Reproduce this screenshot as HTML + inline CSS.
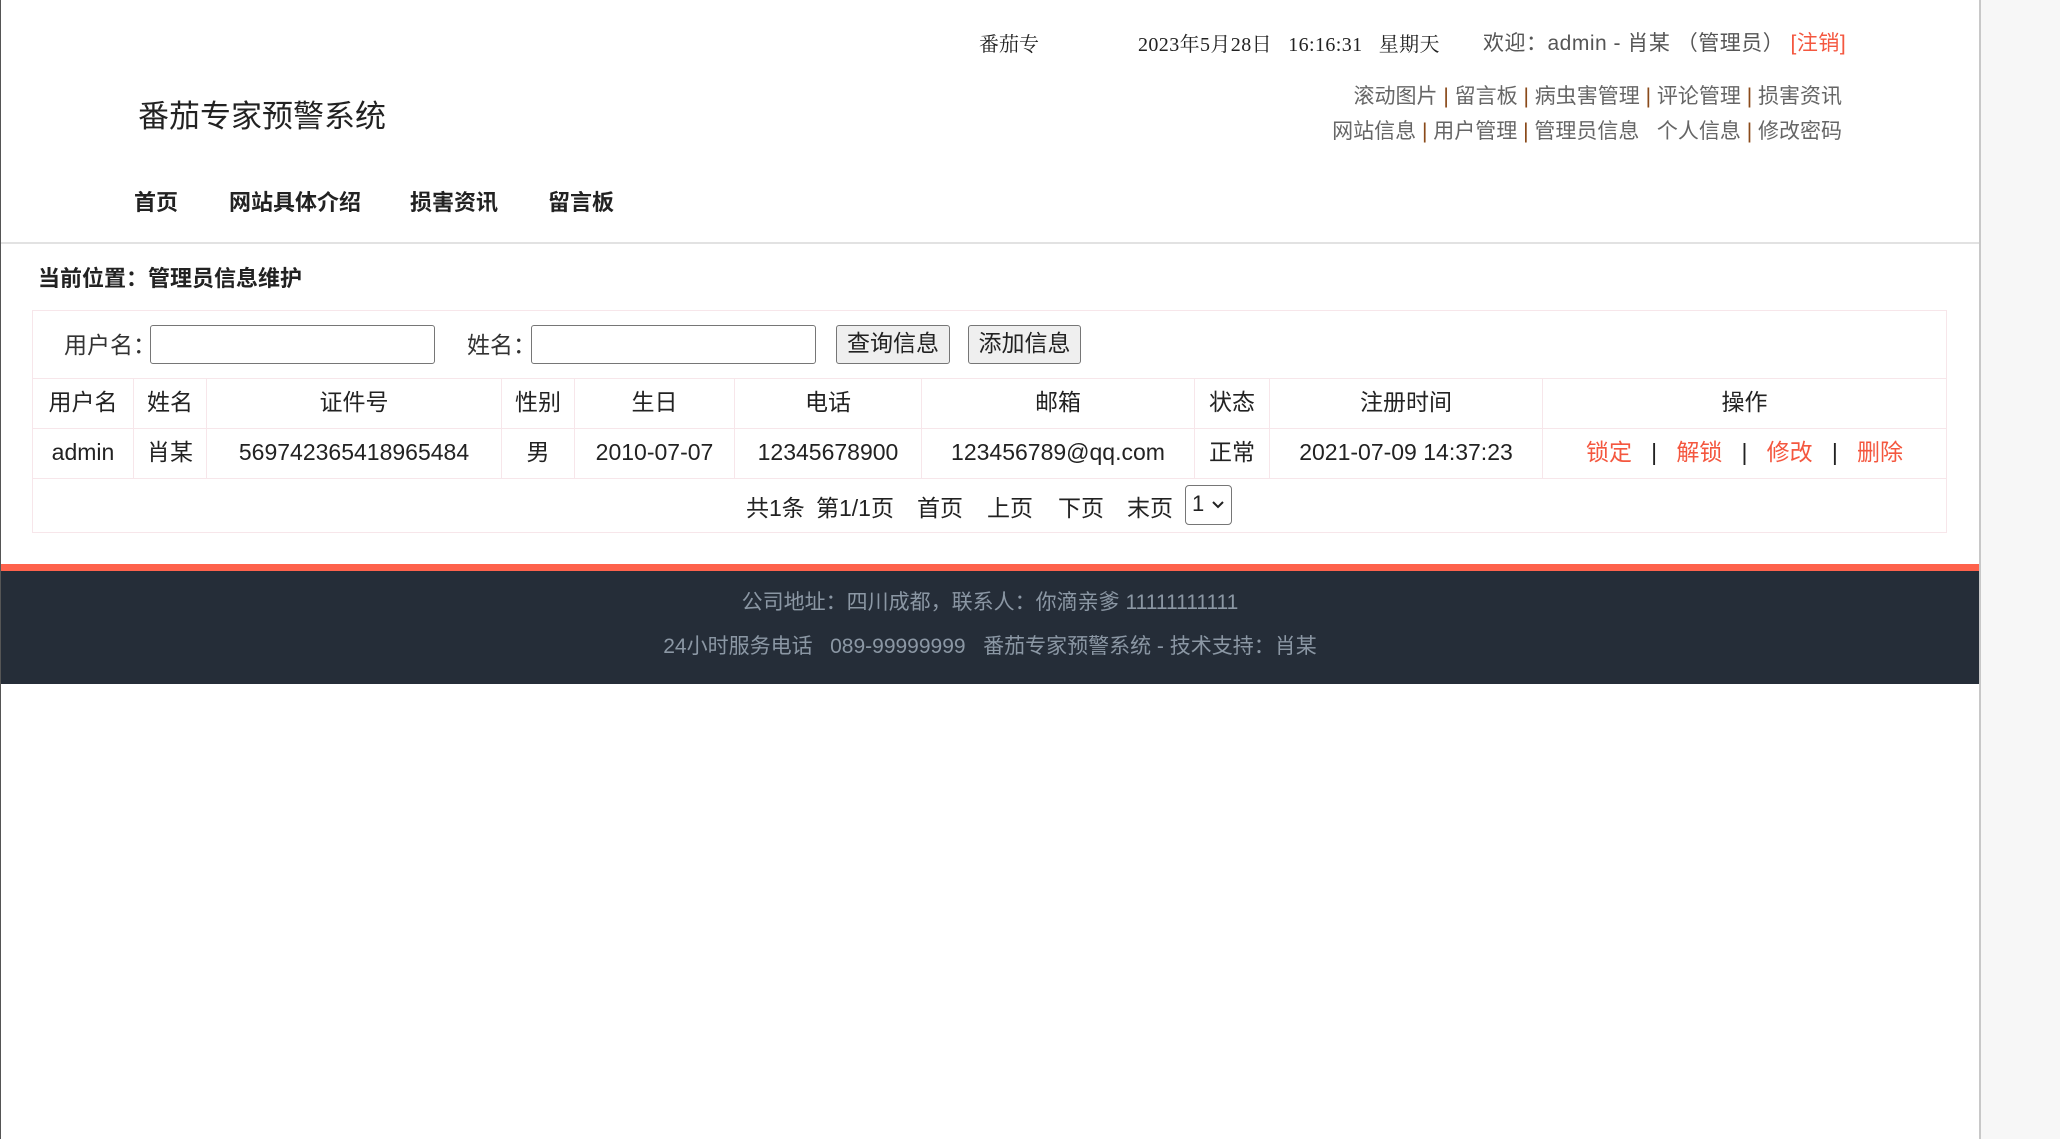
<!DOCTYPE html>
<html><head><meta charset="utf-8"><style>
*{margin:0;padding:0;box-sizing:border-box}
body{width:2060px;height:1139px;background:#fff;position:relative;overflow:hidden;font-family:"Liberation Sans","Noto Sans CJK SC",sans-serif;color:#222}
.a{position:absolute;white-space:nowrap}
.serif{font-family:"Liberation Serif","Noto Serif CJK SC",serif}
.sep{color:#8a4a1a}
table{position:absolute;left:32px;top:378px;width:1915px;border-collapse:collapse;font-size:23px}
td{border:1px solid #f7e6ea;text-align:center;height:50px;line-height:24px;vertical-align:middle;padding-bottom:3px}
.red{color:#f4573f}
.pg{position:absolute;top:489px;font-size:23px;white-space:nowrap}
</style></head><body>
<div class="a" style="left:0;top:0;width:1px;height:1139px;background:#555"></div>
<div class="a" style="left:1979px;top:0;width:81px;height:1139px;background:#f7f7f7;border-left:2px solid #c8c8c8"></div>

<div class="a serif" style="left:979px;top:28px;font-size:20px;color:#222">番茄专</div>
<div class="a serif" style="left:1138px;top:28px;font-size:20px;color:#222;letter-spacing:0.4px">2023年5月28日&nbsp;&nbsp; 16:16:31&nbsp;&nbsp; 星期天</div>
<div class="a" style="left:1483px;top:27px;font-size:21px;color:#555;letter-spacing:0.5px">欢迎：admin - 肖某 （管理员） <span class="red">[注销]</span></div>

<div class="a" style="left:138px;top:91px;font-size:31px;color:#222">番茄专家预警系统</div>
<div class="a" style="right:218px;top:80px;font-size:21px;color:#666">滚动图片<span class="sep"> | </span>留言板<span class="sep"> | </span>病虫害管理<span class="sep"> | </span>评论管理<span class="sep"> | </span>损害资讯</div>
<div class="a" style="right:218px;top:115px;font-size:21px;color:#666">网站信息<span class="sep"> | </span>用户管理<span class="sep"> | </span>管理员信息&nbsp;&nbsp; 个人信息<span class="sep"> | </span>修改密码</div>

<div class="a" style="left:134px;top:185px;font-size:22px;font-weight:bold">首页</div>
<div class="a" style="left:229px;top:185px;font-size:22px;font-weight:bold">网站具体介绍</div>
<div class="a" style="left:410px;top:185px;font-size:22px;font-weight:bold">损害资讯</div>
<div class="a" style="left:548px;top:185px;font-size:22px;font-weight:bold">留言板</div>
<div class="a" style="left:1px;top:242px;width:1978px;height:2px;background:#e2e2e2"></div>

<div class="a" style="left:38px;top:261px;font-size:22px;font-weight:bold">当前位置：管理员信息维护</div>

<div class="a" style="left:32px;top:310px;width:1915px;height:223px;border:1px solid #f7e6ea"></div>
<div class="a" style="left:64px;top:326px;font-size:23px;color:#333">用户名：</div>
<div class="a" style="left:150px;top:325px;width:285px;height:39px;border:1px solid #767676;border-radius:3px"></div>
<div class="a" style="left:467px;top:326px;font-size:23px;color:#333">姓名：</div>
<div class="a" style="left:531px;top:325px;width:285px;height:39px;border:1px solid #767676;border-radius:3px"></div>
<div class="a" style="left:836px;top:325px;width:114px;height:39px;border:1px solid #767676;border-radius:3px;background:#efefef;font-size:23px;text-align:center;line-height:35px">查询信息</div>
<div class="a" style="left:968px;top:325px;width:113px;height:39px;border:1px solid #767676;border-radius:3px;background:#efefef;font-size:23px;text-align:center;line-height:35px">添加信息</div>

<table>
<tr><td style="width:101px">用户名</td><td style="width:73px">姓名</td><td style="width:295px">证件号</td><td style="width:73px">性别</td><td style="width:160px">生日</td><td style="width:187px">电话</td><td style="width:273px">邮箱</td><td style="width:75px">状态</td><td style="width:273px">注册时间</td><td>操作</td></tr>
<tr><td>admin</td><td>肖某</td><td>569742365418965484</td><td>男</td><td>2010-07-07</td><td>12345678900</td><td>123456789@qq.com</td><td>正常</td><td>2021-07-09 14:37:23</td><td><span class="red">锁定</span>&nbsp;&nbsp; | &nbsp;&nbsp;<span class="red">解锁</span>&nbsp;&nbsp; | &nbsp;&nbsp;<span class="red">修改</span>&nbsp;&nbsp; | &nbsp;&nbsp;<span class="red">删除</span></td></tr>
</table>

<div class="pg" style="left:746px">共1条</div>
<div class="pg" style="left:816px">第1/1页</div>
<div class="pg" style="left:917px">首页</div>
<div class="pg" style="left:987px">上页</div>
<div class="pg" style="left:1058px">下页</div>
<div class="pg" style="left:1127px">末页</div>
<div class="a" style="left:1185px;top:485px;width:47px;height:40px;border:1px solid #767676;border-radius:4px;font-size:22px;line-height:36px;padding-left:6px">1<svg style="position:absolute;left:26px;top:15px" width="12" height="8" viewBox="0 0 12 8"><path d="M1 1l5 5 5-5" fill="none" stroke="#222" stroke-width="2"/></svg></div>

<div class="a" style="left:1px;top:564px;width:1978px;height:7px;background:#fe624c"></div>
<div class="a" style="left:1px;top:571px;width:1978px;height:113px;background:#252d38"></div>
<div class="a" style="left:1px;top:586px;width:1978px;text-align:center;font-size:21px;color:#8b97a4">公司地址：四川成都，联系人：你滴亲爹 11111111111</div>
<div class="a" style="left:1px;top:630px;width:1978px;text-align:center;font-size:21px;color:#8b97a4">24小时服务电话&nbsp;&nbsp; 089-99999999&nbsp;&nbsp; 番茄专家预警系统 - 技术支持：肖某</div>
</body></html>
